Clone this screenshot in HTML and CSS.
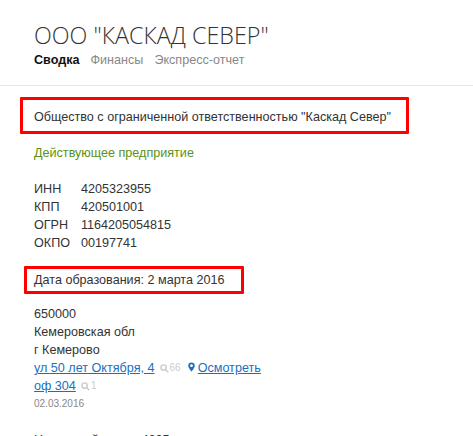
FILE: index.html
```html
<!DOCTYPE html>
<html lang="ru">
<head>
<meta charset="utf-8">
<title>ООО "КАСКАД СЕВЕР"</title>
<link rel="stylesheet" href="styles.css">
</head>
<body>
<header class="head">
  <h1 class="title">ООО "КАСКАД СЕВЕР"</h1>
  <nav class="tabs"><a class="tab active">Сводка</a><a class="tab">Финансы</a><a class="tab">Экспресс-отчет</a></nav>
</header>
<main class="content">
  <div class="marked marked-name">Общество с ограниченной ответственностью "Каскад Север"</div>
  <div class="status">Действующее предприятие</div>
  <dl class="codes">
    <dt>ИНН</dt><dd>4205323955</dd>
    <dt>КПП</dt><dd>420501001</dd>
    <dt>ОГРН</dt><dd>1164205054815</dd>
    <dt>ОКПО</dt><dd>00197741</dd>
  </dl>
  <div class="marked marked-date">Дата образования: 2 марта 2016</div>
  <div class="address">
    <div>650000</div>
    <div>Кемеровская обл</div>
    <div>г Кемерово</div>
    <div class="addr-row"><a class="link">ул 50 лет Октября, 4</a><span class="count"><svg class="mag" viewBox="0 0 10 10"><circle cx="4" cy="4" r="3" /><path d="M6.2 6.2 9.2 9.2"/></svg>66</span><svg class="pin" viewBox="0 0 10 13"><path fill-rule="evenodd" d="M5 0a4.6 4.6 0 0 0-4.6 4.6C.4 7.8 5 13 5 13s4.6-5.2 4.6-8.4A4.6 4.6 0 0 0 5 0Zm0 6.6a2 2 0 1 1 0-4 2 2 0 0 1 0 4Z"/></svg><a class="link">Осмотреть</a></div>
    <div class="addr-row"><a class="link">оф 304</a><span class="count"><svg class="mag" viewBox="0 0 10 10"><circle cx="4" cy="4" r="3" /><path d="M6.2 6.2 9.2 9.2"/></svg>1</span></div>
    <div class="date">02.03.2016</div>
  </div>
  <div class="tax">Налоговый орган: 4205</div>
</main>
</body>
</html>
```
FILE: styles.css
```css
html, body { margin: 0; padding: 0; height: 436px; overflow: hidden; background: #fff; }
body { font-family: "Liberation Sans", Arial, sans-serif; font-size: 12.6px; line-height: 18px; color: #333; }
.head { padding: 21px 0 0 34px; height: 64px; border-bottom: 1px solid #e7e7e7; }
.title { margin: 0; font-family: "Open Sans", sans-serif; font-weight: 300; font-size: 23.3px; line-height: 28px; color: #333; }
.tabs { display: flex; gap: 11px; margin-top: 2px; font-size: 12.6px; line-height: 18px; }
.tab { color: #888; }
.tab.active { color: #111; font-weight: 700; }
.content { padding: 0 0 0 34px; }
.marked { position: relative; }
.marked::before { content: ""; position: absolute; border: 3px solid #f00; border-radius: 1px; pointer-events: none; }
.marked-name { margin-top: 22px; }
.marked-name::before { left: -14px; top: -11px; width: 383px; height: 31px; }
.status { margin-top: 18px; color: #5a9216; }
.codes { display: grid; grid-template-columns: 47px 1fr; margin: 18px 0 0; }
.codes dd { margin: 0; }
.marked-date { margin-top: 19px; }
.marked-date::before { left: -10px; top: -5px; width: 214px; height: 22px; }
.address { margin-top: 16px; }
.addr-row { display: flex; align-items: center; }
.link { color: #1a6fc0; text-decoration: underline; }
.count { color: #ccc; font-size: 10px; margin-left: 5px; display: inline-flex; align-items: center; gap: 1px; }
.mag { width: 9px; height: 9px; fill: none; stroke: #ccc; stroke-width: 1.6; }
.pin { width: 7px; height: 10px; fill: #1a6fc0; margin: 0 3px 2px 7px; }
.date { font-size: 10px; color: #888; line-height: 18px; }
.tax { margin-top: 18px; }
```
